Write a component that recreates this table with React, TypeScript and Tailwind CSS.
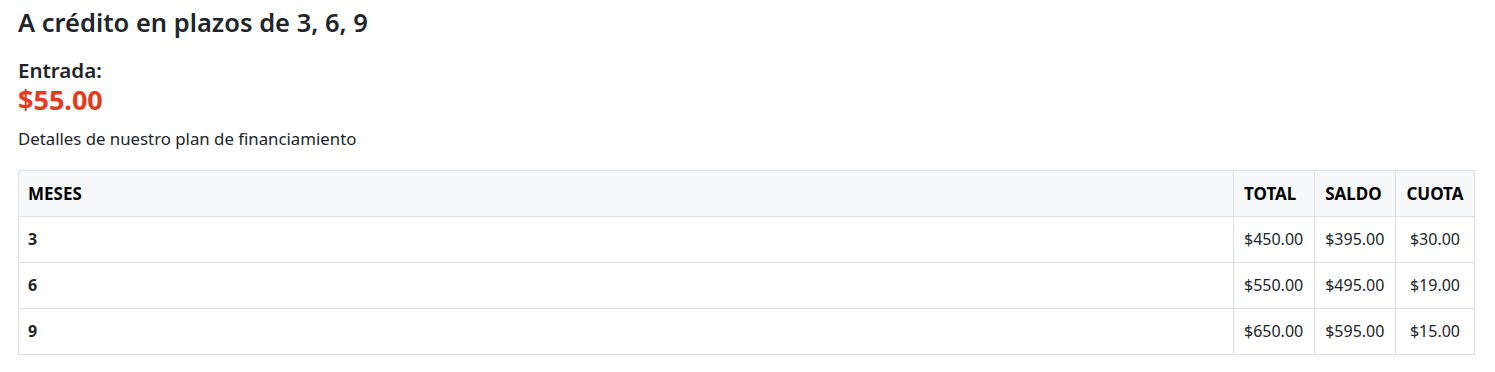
const rows = [
  { meses: '3', total: '$450.00', saldo: '$395.00', cuota: '$30.00' },
  { meses: '6', total: '$550.00', saldo: '$495.00', cuota: '$19.00' },
  { meses: '9', total: '$650.00', saldo: '$595.00', cuota: '$15.00' },
];

export default function App() {
  return (
    <div className="min-h-screen bg-white pl-[18px] pr-[20px] pt-[6px] text-[#212529]" style={{ fontFamily: '"Noto Sans", "Open Sans", sans-serif' }}>
      <h2 className="text-[25.5px] font-semibold leading-[32px]">A crédito en plazos de 3, 6, 9</h2>
      <div className="mt-[18px] text-[20.5px] font-semibold leading-[28px]">Entrada:</div>
      <div className="text-[27px] font-bold leading-[32px] text-[#e23b1d]">$55.00</div>
      <p className="mt-[11px] text-[16.8px] leading-[24px]">Detalles de nuestro plan de financiamiento</p>

      <table className="mt-[19px] w-full border-collapse border border-[#dee2e6] text-[16px]">
        <thead>
          <tr className="bg-[#f7f8fa] text-[17px] text-black">
            <th className="w-full border border-[#dee2e6] px-[9px] py-[10px] text-left font-bold leading-[25px]">MESES</th>
            <th className="whitespace-nowrap border border-[#dee2e6] px-[10.5px] py-[10px] text-left font-bold leading-[25px]">TOTAL</th>
            <th className="whitespace-nowrap border border-[#dee2e6] px-[10.5px] py-[10px] text-left font-bold leading-[25px]">SALDO</th>
            <th className="whitespace-nowrap border border-[#dee2e6] px-[10.5px] py-[10px] text-center font-bold leading-[25px]">CUOTA</th>
          </tr>
        </thead>
        <tbody>
          {rows.map((r) => (
            <tr key={r.meses}>
              <td className="border border-[#dee2e6] px-[9px] py-[10px] font-bold leading-[25px]">{r.meses}</td>
              <td className="whitespace-nowrap border border-[#dee2e6] px-[10.5px] py-[10px] leading-[25px]">{r.total}</td>
              <td className="whitespace-nowrap border border-[#dee2e6] px-[10.5px] py-[10px] leading-[25px]">{r.saldo}</td>
              <td className="whitespace-nowrap border border-[#dee2e6] px-[10.5px] py-[10px] text-center leading-[25px]">{r.cuota}</td>
            </tr>
          ))}
        </tbody>
      </table>
    </div>
  );
}
